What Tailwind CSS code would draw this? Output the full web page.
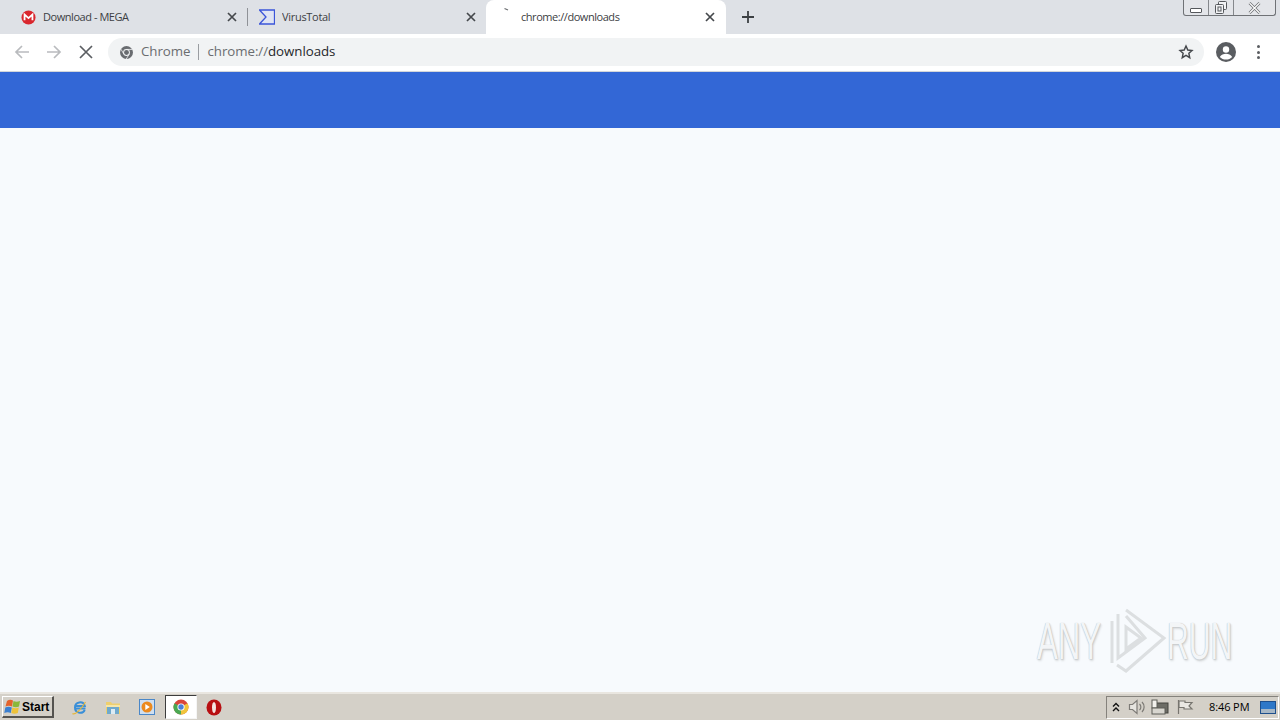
<!DOCTYPE html>
<html lang="en">
<head>
<meta charset="utf-8">
<title>chrome://downloads</title>
<script src="https://cdn.jsdelivr.net/npm/@tailwindcss/browser@4"></script>
</head>
<body class="m-0 overflow-hidden">
<div class="relative flex h-[720px] w-[1280px] flex-col overflow-hidden bg-[#f7fafd] font-['Open_Sans',sans-serif]">

  <!-- Tab strip -->
  <div class="relative flex h-[34px] shrink-0 items-stretch bg-[#dee1e6] pl-[8px]">
    <div class="flex w-[239px] items-center pl-[13px] pr-[9px] text-[11px] tracking-[-0.45px] text-[#3c4043]">
      <svg class="mr-[7px] shrink-0" width="15" height="15" viewBox="0 0 16 16"><circle cx="8" cy="8" r="7.5" fill="#d9272e"/><path d="M3.8 11V4.8L8 8.6l4.2-3.8V11" fill="none" stroke="#fff" stroke-width="1.9"/></svg>
      <span class="flex-1 truncate">Download - MEGA</span>
      <svg width="10" height="10" viewBox="0 0 10 10" class="mr-[1px]"><path d="M1 1l8 8M9 1l-8 8" stroke="#45484c" stroke-width="1.7"/></svg>
    </div>
    <div class="my-[8px] w-px bg-[#8f9297]"></div>
    <div class="flex w-[238px] items-center pl-[11px] pr-[10px] text-[11px] tracking-[-0.3px] text-[#3c4043]">
      <svg class="mr-[7px] shrink-0" width="16" height="16" viewBox="0 0 16 16"><path d="M0.5 1h15v14H0.5L7 8z" fill="#dfe4f4" stroke="#3b55d9" stroke-width="1.3"/></svg>
      <span class="flex-1 truncate">VirusTotal</span>
      <svg width="10" height="10" viewBox="0 0 10 10"><path d="M1 1l8 8M9 1l-8 8" stroke="#45484c" stroke-width="1.7"/></svg>
    </div>
    <div class="flex h-[34px] w-[240px] items-center rounded-t-[8px] bg-white pl-[15px] pr-[11px] text-[11px] tracking-[-0.45px] text-[#3c4043]">
      <svg class="mr-[4px] shrink-0 -translate-y-[4px]" width="16" height="16" viewBox="0 0 16 16"><path d="M3.5 3.5L7 5" stroke="#6a6d70" stroke-width="1.2" fill="none"/></svg>
      <span class="flex-1 truncate">chrome://downloads</span>
      <svg width="10" height="10" viewBox="0 0 10 10"><path d="M1 1l8 8M9 1l-8 8" stroke="#45484c" stroke-width="1.7"/></svg>
    </div>
    <div class="flex w-[44px] items-center justify-center">
      <svg width="14" height="14" viewBox="0 0 14 14"><path d="M7 1v12M1 7h12" stroke="#3c4043" stroke-width="1.8"/></svg>
    </div>
    <!-- Window controls -->
    <div class="absolute right-[4px] top-0 flex h-[16px] w-[93px] rounded-b-[3px] border border-t-0 border-[#6f7276] bg-[#e3e5e9]">
      <div class="flex w-[25px] items-end justify-center border-r border-[#85888c] pb-[2px]">
        <div class="h-[5px] w-[12px] rounded-[1px] border border-[#55585c] bg-white"></div>
      </div>
      <div class="flex w-[25px] items-center justify-center border-r border-[#85888c]">
        <svg width="13" height="13" viewBox="0 0 13 13" fill="#f2f3f5" stroke="#55585c"><rect x="3.5" y="0.5" width="8" height="8" rx="1"/><rect x="0.5" y="3.5" width="8" height="9" rx="1"/><rect x="3" y="6" width="3" height="4"/></svg>
      </div>
      <div class="flex flex-1 items-center justify-center">
        <svg width="13" height="12" viewBox="0 0 13 12"><path d="M1.5 1l10 10M11.5 1l-10 10" stroke="#6a6d70" stroke-width="2.6"/><path d="M1.5 1l10 10M11.5 1l-10 10" stroke="#fff" stroke-width="1.1"/></svg>
      </div>
    </div>
  </div>

  <!-- Toolbar -->
  <div class="flex h-[38px] shrink-0 items-center border-b border-[#d3d6da] bg-white pb-[1px]">
    <div class="flex w-[108px] shrink-0 items-center pl-[14px]">
      <svg width="16" height="16" viewBox="0 0 16 16" fill="none" stroke="#b9bbbe" stroke-width="1.7"><path d="M15 8H2M8 2L2 8l6 6"/></svg>
      <svg class="ml-[16px]" width="16" height="16" viewBox="0 0 16 16" fill="none" stroke="#b9bbbe" stroke-width="1.7"><path d="M1 8h13M8 2l6 6-6 6"/></svg>
      <svg class="ml-[17px]" width="14" height="14" viewBox="0 0 14 14" fill="none" stroke="#5b5e62" stroke-width="1.7"><path d="M1 1l12 12M13 1L1 13"/></svg>
    </div>
    <div class="flex h-[28px] w-[1096px] shrink-0 items-center rounded-full bg-[#f1f3f4] pl-[12px] pr-[10px] text-[13.3px] tracking-[-0.05px] text-[#6a6d70]">
      <svg class="mr-[8px] shrink-0" width="13" height="13" viewBox="0 0 16 16"><circle cx="8" cy="8" r="8" fill="#696c70"/><circle cx="8" cy="8" r="4.2" fill="#f1f3f4"/><circle cx="8" cy="8" r="3" fill="#696c70"/><path d="M8 4.2h7M4.7 10l-3.4-6M11.3 10l-3.6 6" stroke="#f1f3f4" stroke-width="1"/></svg>
      <span>Chrome</span>
      <span class="mx-[8px] h-[16px] w-px bg-[#9a9da1]"></span>
      <span>chrome://<span class="text-[#26282b]">downloads</span></span>
      <svg class="ml-auto" width="16" height="16" viewBox="0 0 24 24" fill="none" stroke="#45484c" stroke-width="2.2"><path d="M12 3l2.7 6 6.300.7-4.700 4.300 1.300 6.500-5.600-3.300-5.600 3.300 1.300-6.500L3 9.700 9.300 9z"/></svg>
    </div>
    <div class="flex flex-1 items-center pl-[12px]">
      <svg width="20" height="20" viewBox="0 0 20 20"><circle cx="10" cy="10" r="10" fill="#5a5d61"/><circle cx="10" cy="7.5" r="3.2" fill="#fff"/><path d="M3.8 15c1.4-2.6 3.8-3.3 6.2-3.3s4.8.7 6.2 3.3c-3 3.4-9.4 3.400-12.400 0z" fill="#fff"/></svg>
      <div class="ml-[21px] flex flex-col gap-[2.5px]">
        <span class="size-[3px] rounded-full bg-[#5a5d61]"></span>
        <span class="size-[3px] rounded-full bg-[#5a5d61]"></span>
        <span class="size-[3px] rounded-full bg-[#5a5d61]"></span>
      </div>
    </div>
  </div>

  <!-- Page -->
  <div class="h-[56px] shrink-0 bg-[#3367d6]"></div>
  <div class="flex-1 bg-[#f7fafd]"></div>

  <!-- Watermark -->
  <div class="absolute left-[1037px] top-[608px] flex h-[66px] w-[198px] items-center font-['Liberation_Sans',sans-serif] text-[#f3f5f7] [text-shadow:0_0_1px_#aeb2b5,1px_1px_2px_#c9ccce,2px_2px_3px_#dfe2e4]">
    <span class="inline-block w-[70px] origin-left scale-x-[0.6] text-[52px] leading-none">ANY</span>
    <svg class="shrink-0" width="60" height="66" viewBox="0 0 60 66" fill="none" stroke="#dcdfe1" stroke-width="3"><path d="M5 13v42M11 6v44l27-20-19-22M19 2l38 28-38 33-9-6"/><path d="M19 19v22l15-11z"/></svg>
    <span class="inline-block w-[66px] origin-left scale-x-[0.58] text-[52px] leading-none">RUN</span>
  </div>

  <!-- Taskbar -->
  <div class="flex h-[28px] shrink-0 items-center border-t-2 border-[#e9e6e0] bg-[#d4d0c8] font-['Liberation_Sans',sans-serif]">
    <div class="ml-[2px] flex h-[22px] w-[52px] items-center border border-b-2 border-r-2 border-white border-b-[#55534f] border-r-[#55534f] bg-[#d4d0c8] text-[12px] font-bold text-black">
      <svg class="ml-[1px] mr-[1px] shrink-0" width="17" height="18" viewBox="0 0 17 18"><path d="M3 3c2-1.500 4-1.500 6-.5L8 8.500C6 7.500 3.500 7.500 1.500 8.500z" fill="#e4632b"/><path d="M9.500 3c2 1 4 1 6.500 0l-1 5.500c-2 1-4.500 1-6.500 0z" fill="#8ab83a"/><path d="M1.300 9.500c2-1 4.500-1 6.500 0l-1 5.500c-2-1-4.500-1-6.500 0z" fill="#3a7fd0"/><path d="M8.300 9.500c2 1 4.500 1 6.500 0l-1 5.500c-2 1-4.500 1-6.500 0z" fill="#eec23a"/></svg>
      Start
    </div>
    <svg class="ml-[17px] shrink-0" width="18" height="18" viewBox="0 0 18 18" fill="none"><path d="M14.500 10.500H4.500M4.200 8h9.600A5 5 0 0 0 4 9.500 5.200 5.200 0 0 0 13.800 12" stroke="#3a8fd8" stroke-width="2"/><path d="M1.500 15.500c2.500 2 9-4.500 13-11.500" stroke="#e4b63a" stroke-width="1.200"/></svg>
    <svg class="ml-[16px] shrink-0" width="16" height="16" viewBox="0 0 16 16"><path d="M1 3h5l1 1.500h8V15H1z" fill="#eecf6e"/><path d="M2 8h12v7H2z" fill="#6fa9cc"/><path d="M1 6h14v2H1z" fill="#f6e6a8"/><rect x="6" y="10" width="4" height="5" fill="#dcebf3"/></svg>
    <svg class="ml-[18px] shrink-0" width="16" height="16" viewBox="0 0 16 16"><rect x="0.500" y="0.500" width="15" height="15" fill="#cfdff0" stroke="#4a87c8"/><circle cx="8" cy="8" r="5.500" fill="#ec8a1e"/><path d="M6.300 5l4.500 3-4.500 3z" fill="#fff"/></svg>
    <div class="ml-[10px] flex h-[24px] w-[32px] items-center justify-center border border-[#3d3d3d] border-b-[#f5f5f5] border-r-[#f5f5f5] bg-white">
      <svg width="16" height="16" viewBox="0 0 16 16"><circle cx="8" cy="8" r="7.500" fill="#d9453a"/><path d="M8 8l6.500-3.800A7.500 7.500 0 0 1 8 15.500z" fill="#f0c43a"/><path d="M8 8v7.500A7.500 7.500 0 0 1 1.500 4.200z" fill="#4aa852"/><circle cx="8" cy="8" r="3.600" fill="#fff"/><circle cx="8" cy="8" r="2.700" fill="#4a7fd8"/></svg>
    </div>
    <svg class="ml-[9px] shrink-0" width="16" height="17" viewBox="0 0 16 17"><ellipse cx="8" cy="8.500" rx="7.500" ry="8" fill="#b80f12"/><ellipse cx="8" cy="8.500" rx="2" ry="5.500" fill="#f4e3e0"/></svg>

    <div class="ml-auto mr-[1px] flex h-[23px] w-[173px] items-center border border-[#85827c] border-b-white border-r-white text-black">
      <svg class="ml-[5px] shrink-0" width="8" height="10" viewBox="0 0 8 10" fill="none" stroke="#111" stroke-width="1.400"><path d="M1 4.500l3-3 3 3M1 9l3-3 3 3"/></svg>
      <svg class="ml-[8px] shrink-0" width="18" height="16" viewBox="0 0 18 16" fill="none" stroke="#7d7b76" stroke-width="1.200"><path d="M1.500 5.500h3L9 1.500v13l-4.500-4h-3z" fill="#e6e4df"/><path d="M11.500 5a4 4 0 0 1 0 6M14 3a7 7 0 0 1 0 10"/></svg>
      <svg class="ml-[5px] shrink-0" width="18" height="17" viewBox="0 0 18 17"><rect x="5" y="4" width="12" height="10" fill="#6d6d66" stroke="#44443f"/><rect x="1" y="1" width="5" height="8" fill="#f2f1ec" stroke="#5c5c56"/><rect x="1" y="9" width="13" height="6" fill="#d8d6cf" stroke="#5c5c56"/></svg>
      <svg class="ml-[8px] shrink-0" width="17" height="16" viewBox="0 0 17 16" fill="none" stroke="#77756f" stroke-width="1.200"><path d="M1.500 1v14"/><path d="M2 2h6v1.500h7L12 7l3 3H7V8.500H2z" fill="#e9e7e2"/></svg>
      <span class="ml-[15px] whitespace-nowrap font-['Open_Sans',sans-serif] text-[11px] tracking-[-0.1px]">8:46 PM</span>
      <svg class="ml-auto mr-[2px] shrink-0" width="16" height="13" viewBox="0 0 16 13"><rect x="0.500" y="0.500" width="15" height="12" fill="#2f78c8" stroke="#1e4f8c"/><rect x="1" y="8" width="14" height="4" fill="#a8b8c6"/></svg>
    </div>
  </div>
</div>
</body>
</html>
